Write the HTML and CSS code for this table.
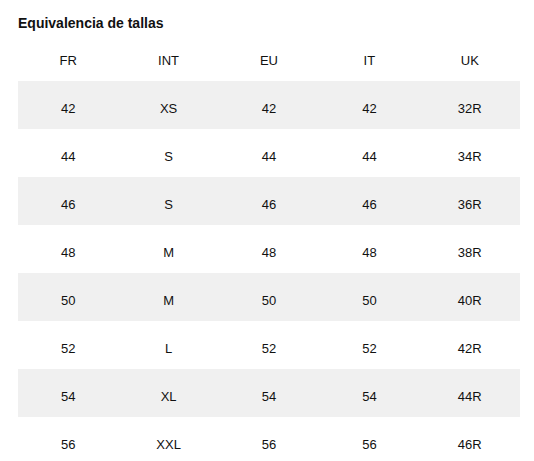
FILE: index.html
```html
<!DOCTYPE html>
<html lang="es">
<head>
<meta charset="utf-8">
<link rel="stylesheet" href="styles.css">
</head>
<body>
<div class="wrap">
  <h2 class="title">Equivalencia de tallas</h2>
  <div class="table">
    <div class="row head"><span>FR</span><span>INT</span><span>EU</span><span>IT</span><span>UK</span></div>
    <div class="row alt"><span>42</span><span>XS</span><span>42</span><span>42</span><span>32R</span></div>
    <div class="row"><span>44</span><span>S</span><span>44</span><span>44</span><span>34R</span></div>
    <div class="row alt"><span>46</span><span>S</span><span>46</span><span>46</span><span>36R</span></div>
    <div class="row"><span>48</span><span>M</span><span>48</span><span>48</span><span>38R</span></div>
    <div class="row alt"><span>50</span><span>M</span><span>50</span><span>50</span><span>40R</span></div>
    <div class="row"><span>52</span><span>L</span><span>52</span><span>52</span><span>42R</span></div>
    <div class="row alt"><span>54</span><span>XL</span><span>54</span><span>54</span><span>44R</span></div>
    <div class="row"><span>56</span><span>XXL</span><span>56</span><span>56</span><span>46R</span></div>
  </div>
</div>
</body>
</html>
```
FILE: styles.css
```css
html, body {
  margin: 0;
  padding: 0;
  background: #fff;
}
body {
  font-family: "Liberation Sans", Arial, sans-serif;
  color: #111;
}
.wrap {
  padding: 15px 14px 0 18px;
}
.title {
  margin: 0;
  font-size: 14px;
  line-height: 16px;
  font-weight: bold;
  color: #111;
}
.table {
  margin-top: 6px;
  width: 502px;
}
.row {
  display: grid;
  grid-template-columns: repeat(5, 1fr);
  height: 48px;
  box-sizing: border-box;
  padding-top: 6px;
  align-items: center;
  font-size: 13px;
  text-align: center;
}
.row.head {
  height: 44px;
  padding-top: 2px;
}
.row.alt {
  background: #f0f0f0;
}
```
